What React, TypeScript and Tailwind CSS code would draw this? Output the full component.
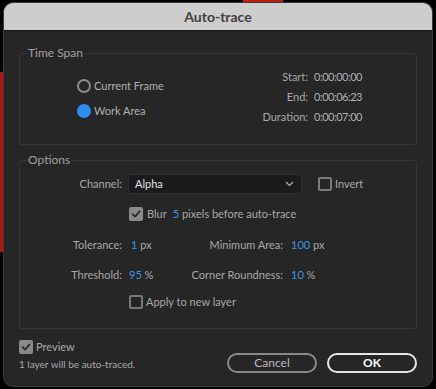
import React from "react";

const font = { fontFamily: "Lato, 'Open Sans', sans-serif" };

function Check({ checked }: { checked?: boolean }) {
  if (checked) {
    return (
      <span className="flex h-[14px] w-[14px] items-center justify-center rounded-[2px] bg-[#8a8a8a]">
        <svg width="10" height="10" viewBox="0 0 10 10">
          <path d="M1.6 5.2 L4 7.6 L8.6 2.4" fill="none" stroke="#2b2b2b" strokeWidth="1.8" strokeLinecap="round" strokeLinejoin="round" />
        </svg>
      </span>
    );
  }
  return <span className="block h-[14px] w-[14px] rounded-[2px] border-2 border-[#7a7a7a]" />;
}

function Blue({ children }: { children: React.ReactNode }) {
  return <span className="text-[#3d95e6]">{children}</span>;
}

export default function App() {
  return (
    <div className="relative h-[389px] w-[436px] overflow-hidden bg-black pl-[3px] pt-[2px]" style={font}>
      <div className="absolute left-0 top-[72px] h-[180px] w-[3px] bg-[#b01a0e]" />
      <div className="absolute left-[243px] top-0 h-[2px] w-[40px] bg-[#c01e10]" />
      <div className="flex h-[385px] w-[430px] flex-col overflow-hidden rounded-[10px] border border-[#3a3a3a] bg-[#262626]">
        <div className="flex h-[28px] shrink-0 items-center justify-center border-b border-[#141414] bg-[#cdcdcd] text-[14px] font-bold text-[#404040]">
          Auto-trace
        </div>
        <div className="flex flex-1 flex-col px-[15px] pt-[15px] text-[11px] text-[#a8a8a8]">
          <fieldset className="h-[99px] rounded-[3px] border border-[#363636] px-[7px]">
            <legend className="px-[1px] text-[12px] leading-[14px] text-[#a0a0a0]">Time Span</legend>
            <div className="flex">
              <div className="ml-[50px] mt-[16px] flex flex-col gap-[5px] text-[#b0b0b0]">
                <div className="flex h-[20px] items-center gap-[3px]">
                  <span className="block h-[14px] w-[14px] rounded-full border-2 border-[#8a8a8a]" />
                  <span>Current Frame</span>
                </div>
                <div className="flex h-[20px] items-center gap-[3px]">
                  <span className="block h-[14px] w-[14px] rounded-full bg-[#2e8cf0]" />
                  <span>Work Area</span>
                </div>
              </div>
              <div className="ml-auto mr-[47px] mt-[7px] grid grid-cols-[auto_auto] gap-x-[6px] text-[#a8a8a8]">
                <span className="h-[20px] text-right leading-[20px]">Start:</span>
                <span className="leading-[20px] tracking-[-0.5px] text-[#b0b0b0]">0:00:00:00</span>
                <span className="h-[20px] text-right leading-[20px]">End:</span>
                <span className="leading-[20px] tracking-[-0.5px] text-[#b0b0b0]">0:00:06:23</span>
                <span className="h-[20px] text-right leading-[20px]">Duration:</span>
                <span className="leading-[20px] tracking-[-0.5px] text-[#b0b0b0]">0:00:07:00</span>
              </div>
            </div>
          </fieldset>

          <fieldset className="mt-[8px] h-[176px] rounded-[3px] border border-[#363636] px-[7px]">
            <legend className="px-[1px] text-[12px] leading-[14px] text-[#a0a0a0]">Options</legend>
            <div className="mt-[7px] flex flex-col">
              <div className="flex h-[20px] items-center">
                <span className="w-[95px] text-right">Channel:</span>
                <div className="ml-[6px] flex h-[20px] w-[174px] items-center justify-between rounded-[3px] border border-[#2e2e2e] bg-[#1b1b1b] pl-[6px] pr-[7px] text-[#e2e2e2]">
                  <span>Alpha</span>
                  <svg width="9" height="6" viewBox="0 0 9 6">
                    <path d="M1 1 L4.5 4.5 L8 1" fill="none" stroke="#b0b0b0" strokeWidth="1.2" />
                  </svg>
                </div>
                <div className="ml-[16px] flex items-center gap-[3px]">
                  <Check />
                  <span>Invert</span>
                </div>
              </div>

              <div className="mt-[10px] flex h-[20px] items-center">
                <span className="ml-[102px]"><Check checked /></span>
                <span className="ml-[4px]">Blur</span>
                <span className="ml-[6px]"><Blue>5</Blue> pixels before auto-trace</span>
              </div>

              <div className="mt-[11px] flex h-[20px] items-center">
                <span className="w-[95px] text-right">Tolerance:</span>
                <div className="ml-[9px] flex w-[152px] justify-between whitespace-nowrap">
                  <span><Blue>1</Blue> px</span>
                  <span>Minimum Area:</span>
                </div>
                <span className="ml-[8px]"><Blue>100</Blue> px</span>
              </div>

              <div className="mt-[10px] flex h-[20px] items-center">
                <span className="w-[95px] text-right">Threshold:</span>
                <div className="ml-[7px] flex w-[154px] justify-between whitespace-nowrap">
                  <span><Blue>95</Blue> %</span>
                  <span>Corner Roundness:</span>
                </div>
                <span className="ml-[8px]"><Blue>10</Blue> %</span>
              </div>

              <div className="mt-[7px] flex h-[20px] items-center">
                <span className="ml-[102px]"><Check /></span>
                <span className="ml-[3px]">Apply to new layer</span>
              </div>
            </div>
          </fieldset>

          <div className="mt-[10px] flex items-start">
            <div className="flex flex-col">
              <div className="flex h-[16px] items-center gap-[3px] text-[#a8a8a8]">
                <Check checked />
                <span className="text-[11px]">Preview</span>
              </div>
              <span className="mt-[1px] text-[10px] leading-[16px] text-[#a8a8a8]">1 layer will be auto-traced.</span>
            </div>
            <div className="ml-auto mt-[14px] flex gap-[10px]">
              <button className="flex h-[20px] w-[90px] items-center justify-center rounded-full border-2 border-[#8a8a8a] text-[12px] text-[#b8b8b8]">
                Cancel
              </button>
              <button className="flex h-[20px] w-[90px] items-center justify-center rounded-full border-2 border-[#e6e6e6] text-[12px] font-bold text-white">
                OK
              </button>
            </div>
          </div>
        </div>
      </div>
    </div>
  );
}
